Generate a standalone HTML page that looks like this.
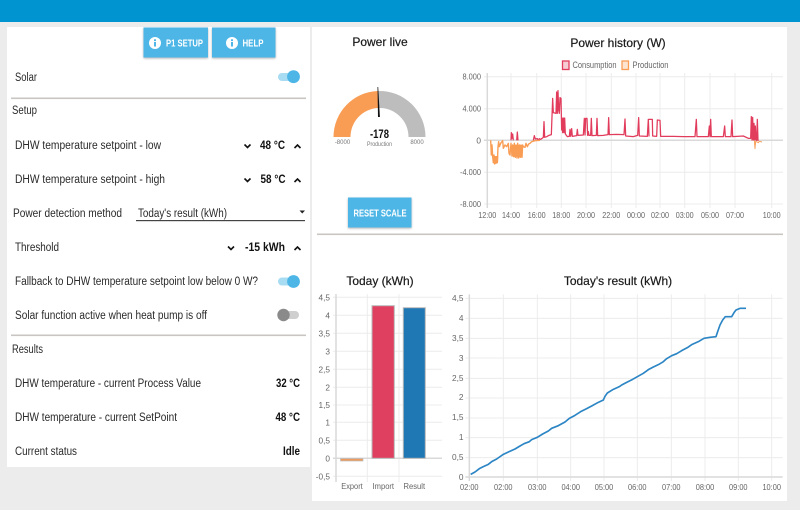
<!DOCTYPE html>
<html lang="en">
<head>
<meta charset="utf-8">
<title>Solar</title>
<style>
html,body{margin:0;padding:0;background:#ececec;width:800px;height:510px;overflow:hidden}
svg{display:block;filter:blur(.3px)}
text{font-family:"Liberation Sans",sans-serif}
.t{font-size:11.5px;fill:#2a2a2a}
.b{font-size:11.5px;font-weight:bold;fill:#111}
.h{font-size:12px;fill:#1a1a1a;text-anchor:middle;stroke:#1a1a1a;stroke-width:.2}
.btn{font-size:10px;font-weight:bold;fill:#fff}
.y{font-size:8.3px;fill:#666;text-anchor:end}
.x{font-size:8.5px;fill:#666;text-anchor:middle}
.l{font-size:9.500px;fill:#666}
.g{stroke:#ececec;stroke-width:1;fill:none}
.a{stroke:#d9d9d9;stroke-width:1.5;fill:none}
.c{fill:none;stroke:#111;stroke-width:1.6}
</style>
</head>
<body>
<svg width="800" height="510" viewBox="0 0 800 510" xmlns="http://www.w3.org/2000/svg">
<defs>
<filter id="s" x="-10%" y="-10%" width="120%" height="130%"><feDropShadow dx="0" dy="1" stdDeviation="1" flood-color="#000" flood-opacity=".3"/></filter>
</defs>
<rect width="800" height="510" fill="#ececec"/>
<rect width="800" height="22" fill="#0095d0"/>
<rect x="7" y="27" width="303" height="440" fill="#fff"/>
<rect x="312" y="27" width="475" height="474" fill="#fff"/>

<!-- top buttons -->
<rect x="143.500" y="27.500" width="64.500" height="30" fill="#4db6e6" filter="url(#s)"/>
<rect x="212" y="27.500" width="63.500" height="30" fill="#4db6e6" filter="url(#s)"/>
<circle cx="155" cy="43" r="6" fill="#fff"/>
<rect x="154" y="42" width="2" height="4.500" fill="#4db6e6"/><rect x="154" y="39.300" width="2" height="1.800" fill="#4db6e6"/>
<circle cx="232" cy="43" r="6" fill="#fff"/>
<rect x="231" y="42" width="2" height="4.500" fill="#4db6e6"/><rect x="231" y="39.300" width="2" height="1.800" fill="#4db6e6"/>
<text class="btn" x="166" y="46.300" textLength="37" lengthAdjust="spacingAndGlyphs">P1 SETUP</text>
<text class="btn" x="242.500" y="46.300" textLength="21" lengthAdjust="spacingAndGlyphs">HELP</text>

<!-- left rows -->
<text class="t" x="15" y="81" textLength="22" lengthAdjust="spacingAndGlyphs">Solar</text>
<rect x="278" y="73" width="20" height="8" rx="4" fill="#a8dcf2"/><circle cx="293.500" cy="76.700" r="6.400" fill="#4db6e6"/>
<rect x="11" y="97.500" width="295" height="1.600" fill="#c9c5c2"/>
<text class="t" x="12" y="114" textLength="25" lengthAdjust="spacingAndGlyphs">Setup</text>

<text class="t" x="15" y="149" textLength="146" lengthAdjust="spacingAndGlyphs">DHW temperature setpoint - low</text>
<path class="c" d="M244.500 144.500l3 3 3-3"/>
<text class="b" x="260" y="149" textLength="25" lengthAdjust="spacingAndGlyphs">48 °C</text>
<path class="c" d="M294.500 148l3-3 3 3"/>

<text class="t" x="15" y="183" textLength="150" lengthAdjust="spacingAndGlyphs">DHW temperature setpoint - high</text>
<path class="c" d="M244.500 178.500l3 3 3-3"/>
<text class="b" x="260.500" y="183" textLength="25" lengthAdjust="spacingAndGlyphs">58 °C</text>
<path class="c" d="M294.500 182l3-3 3 3"/>

<text class="t" x="13" y="217" textLength="109" lengthAdjust="spacingAndGlyphs">Power detection method</text>
<text class="t" x="138" y="217" textLength="89" lengthAdjust="spacingAndGlyphs">Today's result (kWh)</text>
<rect x="136" y="220" width="169" height="1.200" fill="#444"/>
<path d="M299.500 210.500h5.500l-2.750 3z" fill="#222"/>

<text class="t" x="15" y="251" textLength="44" lengthAdjust="spacingAndGlyphs">Threshold</text>
<path class="c" d="M228 246.500l3 3 3-3"/>
<text class="b" x="245" y="251" textLength="40" lengthAdjust="spacingAndGlyphs">-15 kWh</text>
<path class="c" d="M294.500 250l3-3 3 3"/>

<text class="t" x="15" y="285" textLength="243" lengthAdjust="spacingAndGlyphs">Fallback to DHW temperature setpoint low below 0 W?</text>
<rect x="278" y="277.500" width="20" height="8" rx="4" fill="#a8dcf2"/><circle cx="293.500" cy="281.500" r="6.400" fill="#4db6e6"/>

<text class="t" x="15" y="319" textLength="192" lengthAdjust="spacingAndGlyphs">Solar function active when heat pump is off</text>
<rect x="279" y="311" width="20" height="8" rx="4" fill="#cfcfcf"/><circle cx="283.500" cy="315" r="6.200" fill="#8a8a8a"/>

<rect x="11" y="334.500" width="295" height="1.600" fill="#c9c5c2"/>
<text class="t" x="12" y="353" textLength="31" lengthAdjust="spacingAndGlyphs">Results</text>

<text class="t" x="15" y="387" textLength="186" lengthAdjust="spacingAndGlyphs">DHW temperature - current Process Value</text>
<text class="b" x="276" y="387" textLength="24" lengthAdjust="spacingAndGlyphs">32 °C</text>
<text class="t" x="15" y="421" textLength="162" lengthAdjust="spacingAndGlyphs">DHW temperature - current SetPoint</text>
<text class="b" x="275.500" y="421" textLength="24.500" lengthAdjust="spacingAndGlyphs">48 °C</text>
<text class="t" x="15" y="455" textLength="62" lengthAdjust="spacingAndGlyphs">Current status</text>
<text class="b" x="283" y="455" textLength="17" lengthAdjust="spacingAndGlyphs">Idle</text>

<!-- gauge -->
<text class="h" x="380" y="46">Power live</text>
<path d="M333.500 137A46 46 0 0 1 378 91V108A29 29 0 0 0 350.500 137Z" fill="#f99d55"/>
<path d="M378 91A46 46 0 0 1 425.500 137H408.500A29 29 0 0 0 378 108Z" fill="#bdbdbd"/>
<path d="M377.500 87L378.200 87L379.900 117L378 117Z" fill="#111"/>
<text x="379.500" y="138" font-size="11.500" font-weight="bold" fill="#111" text-anchor="middle" textLength="19" lengthAdjust="spacingAndGlyphs">-178</text>
<text x="379.500" y="146" font-size="6" fill="#777" text-anchor="middle" textLength="25" lengthAdjust="spacingAndGlyphs">Production</text>
<text x="342.500" y="144" font-size="6" fill="#777" text-anchor="middle">-8000</text>
<text x="417" y="144" font-size="6" fill="#777" text-anchor="middle">8000</text>
<rect x="348" y="197.500" width="63.500" height="30" fill="#4db6e6" filter="url(#s)"/>
<text class="btn" x="353.500" y="216.500" style="font-size:10.500px" textLength="53" lengthAdjust="spacingAndGlyphs">RESET SCALE</text>
<rect x="317" y="233.500" width="466" height="1.600" fill="#c9c5c2"/>

<!-- Power history -->
<text class="h" x="618" y="47">Power history (W)</text>
<rect x="562.500" y="61" width="6.500" height="8.500" fill="#f6cdd5" stroke="#e23c5c" stroke-width="1.300"/>
<text class="l" x="572.500" y="68" textLength="44" lengthAdjust="spacingAndGlyphs">Consumption</text>
<rect x="622" y="61" width="6.500" height="8.500" fill="#fde4d0" stroke="#f99d55" stroke-width="1.300"/>
<text class="l" x="632.500" y="68" textLength="36" lengthAdjust="spacingAndGlyphs">Production</text>
<path class="g" d="M484 76.700H783M484 108.700H783M484 172.300H783M484 204H783"/>
<path class="g" d="M511 73V208M536.700 73V208M561.300 73V208M586 73V208M611.300 73V208M636 73V208M660 73V208M684.700 73V208M710 73V208M735 73V208M771.700 73V208"/>
<path class="a" d="M484 140.300H783M487.300 73V208"/>
<text class="y" x="481" y="79.500" textLength="18.500" lengthAdjust="spacingAndGlyphs">8.000</text><text class="y" x="481" y="111.500" textLength="18.500" lengthAdjust="spacingAndGlyphs">4.000</text><text class="y" x="481" y="143.500">0</text><text class="y" x="481" y="175" textLength="21" lengthAdjust="spacingAndGlyphs">-4.000</text><text class="y" x="481" y="207" textLength="21" lengthAdjust="spacingAndGlyphs">-8.000</text>
<text class="x" x="487.300" y="218" textLength="18" lengthAdjust="spacingAndGlyphs">12:00</text><text class="x" x="511" y="218" textLength="18" lengthAdjust="spacingAndGlyphs">14:00</text><text class="x" x="536.700" y="218" textLength="18" lengthAdjust="spacingAndGlyphs">16:00</text><text class="x" x="561.300" y="218" textLength="18" lengthAdjust="spacingAndGlyphs">18:00</text><text class="x" x="586" y="218" textLength="18" lengthAdjust="spacingAndGlyphs">20:00</text><text class="x" x="611.300" y="218" textLength="18" lengthAdjust="spacingAndGlyphs">22:00</text><text class="x" x="636" y="218" textLength="18" lengthAdjust="spacingAndGlyphs">00:00</text><text class="x" x="660" y="218" textLength="18" lengthAdjust="spacingAndGlyphs">02:00</text><text class="x" x="684.700" y="218" textLength="18" lengthAdjust="spacingAndGlyphs">03:00</text><text class="x" x="710" y="218" textLength="18" lengthAdjust="spacingAndGlyphs">05:00</text><text class="x" x="735" y="218" textLength="18" lengthAdjust="spacingAndGlyphs">07:00</text><text class="x" x="771.700" y="218" textLength="18" lengthAdjust="spacingAndGlyphs">10:00</text>
<g transform="translate(450 30) scale(.33333)" fill="none" stroke-linejoin="round">
<path stroke="#e23c5c" stroke-width="3.800" d="M183 331L184 308L186 325L188 312L190 331M200 331L202 306L204 331M250 331L253 317L256 327L262 326L264 331L268 326L272 328L280 322L282 275L284 322L290 320L297 316L304 314L308 205L310 248L318 250L320 186L322 250L324 182L326 240L328 250L330 203L333 205L335 300L336 264L338 308L340 264L342 308L344 264L346 312L352 320L358 319L360 298L362 319L365 296L367 319L380 317L382 298L384 316L400 315L403 265L405 315L407 265L411 265L413 316L415 305L417 316L422 316L424 265L426 317L439 316L441 265L443 317L460 316L474 314L476 263L478 314L500 313L522 314L525 267L527 318L550 320L563 316L566 263L568 318L592 319L595 268L597 318L595 268L607 268L608 318L620 319L622 270L630 271L632 319L670 319L700 320L735 320L739 268L741 320L775 320L778 288L780 320L782 268L784 320L820 320L824 288L826 320L843 320L846 270L848 320L880 318L895 325L902 325L904 260L906 330L908 262L910 330L912 280L914 330L916 288L918 330L920 331L922 268L924 331L926 331"/>
<path fill="#f99d55" d="M128 378L145 378L144 398L130 400ZM186 345L218 345L216 382L188 380Z"/>
<path stroke="#f99d55" stroke-width="4.200" d="M122 331L124 375L126 345L128 380L130 398L132 375L134 402L136 380L138 400L140 380L142 398L144 350L146 335L148 350L152 340L158 332L160 355L165 345L170 350L175 340L177 370L180 375L183 340L186 378L188 345L191 380L193 340L196 382L198 345L201 384L203 340L206 384L208 345L211 382L213 345L216 382L218 345L220 350L225 352L228 340L232 350L236 342L240 340L245 335L255 332L270 331"/>
<path stroke="#f99d55" stroke-width="2.800" d="M913 331L915 356L917 334L925 338L928 334L936 336"/>
</g>

<!-- Today bars -->
<text class="h" x="380" y="285">Today (kWh)</text>
<path class="g" d="M333 297.300H442M333 315.300H442M333 333.300H442M333 351.300H442M333 369.300H442M333 387.300H442M333 405H442M333 422.300H442M333 440.300H442M333 476.300H442"/>
<path class="g" d="M367.300 294V482M399 294V482"/>
<path class="a" d="M333 458.300H442M336 294V482"/>
<text class="y" x="330" y="300.300">4,5</text><text class="y" x="330" y="318.300">4</text><text class="y" x="330" y="336.300">3,5</text><text class="y" x="330" y="354.300">3</text><text class="y" x="330" y="372.300">2,5</text><text class="y" x="330" y="390.300">2</text><text class="y" x="330" y="408">1,5</text><text class="y" x="330" y="425.300">1</text><text class="y" x="330" y="443.300">0,5</text><text class="y" x="330" y="461.300">0</text><text class="y" x="330" y="479.300">-0,5</text>
<rect x="340.500" y="458.500" width="22.500" height="2.500" fill="#ef9a5d" stroke="#bbb" stroke-width=".7"/>
<rect x="372" y="305.700" width="22.300" height="152.600" fill="#e0405f" stroke="#b9b9b9" stroke-width="1"/>
<rect x="403.300" y="307.700" width="22" height="150.600" fill="#1f77b4" stroke="#b9b9b9" stroke-width="1"/>
<text class="x" x="352" y="489" textLength="21.500" lengthAdjust="spacingAndGlyphs">Export</text><text class="x" x="383.300" y="489" textLength="21.500" lengthAdjust="spacingAndGlyphs">Import</text><text class="x" x="414.300" y="489" textLength="21.500" lengthAdjust="spacingAndGlyphs">Result</text>

<!-- Today's result -->
<text class="h" x="618" y="285">Today's result (kWh)</text>
<g transform="translate(450 265) scale(.33333)" fill="none">
<path stroke="#ececec" stroke-width="3" d="M46 100H998M46 160H998M46 220H998M46 279H998M46 340H998M46 399H998M46 459H998M46 518H998M46 578H998"/>
<path stroke="#ececec" stroke-width="3" d="M160 88V648M262 88V648M362 88V648M462 88V648M562 88V648M664 88V648M765 88V648M865 88V648M965 88V648"/>
<path stroke="#d9d9d9" stroke-width="4.500" d="M46 636H998M58 88V648"/>
<path stroke="#2c85c4" stroke-width="5" stroke-linejoin="round" d="M62 628L75 621L88 611L100 605L115 598L125 590L140 582L160 568L175 561L195 552L210 543L222 536L238 530L245 524L262 517L278 507L295 498L305 490L325 482L345 471L358 460L375 451L392 440L410 431L425 423L445 412L460 405L465 394L472 384L490 373L508 365L515 360L530 352L548 343L562 335L580 325L595 314L610 306L625 299L640 290L650 281L665 272L680 266L695 257L712 248L725 239L745 230L762 220L780 217L798 215L803 200L810 180L818 165L826 155L845 155L852 143L858 135L870 130L888 130"/>
</g>
<text class="y" x="463.500" y="301">4,5</text><text class="y" x="463.500" y="321">4</text><text class="y" x="463.500" y="341">3,5</text><text class="y" x="463.500" y="361">3</text><text class="y" x="463.500" y="381">2,5</text><text class="y" x="463.500" y="400">2</text><text class="y" x="463.500" y="420">1,5</text><text class="y" x="463.500" y="440">1</text><text class="y" x="463.500" y="460">0,5</text><text class="y" x="463.500" y="480">0</text>
<text class="x" x="469.300" y="490" textLength="18.500" lengthAdjust="spacingAndGlyphs">02:00</text><text class="x" x="503.300" y="490" textLength="18.500" lengthAdjust="spacingAndGlyphs">02:00</text><text class="x" x="537.300" y="490" textLength="18.500" lengthAdjust="spacingAndGlyphs">03:00</text><text class="x" x="570.700" y="490" textLength="18.500" lengthAdjust="spacingAndGlyphs">04:00</text><text class="x" x="604" y="490" textLength="18.500" lengthAdjust="spacingAndGlyphs">05:00</text><text class="x" x="637.300" y="490" textLength="18.500" lengthAdjust="spacingAndGlyphs">06:00</text><text class="x" x="671.300" y="490" textLength="18.500" lengthAdjust="spacingAndGlyphs">07:00</text><text class="x" x="705" y="490" textLength="18.500" lengthAdjust="spacingAndGlyphs">08:00</text><text class="x" x="738.300" y="490" textLength="18.500" lengthAdjust="spacingAndGlyphs">09:00</text><text class="x" x="771.700" y="490" textLength="18.500" lengthAdjust="spacingAndGlyphs">10:00</text>
</svg>
</body>
</html>
